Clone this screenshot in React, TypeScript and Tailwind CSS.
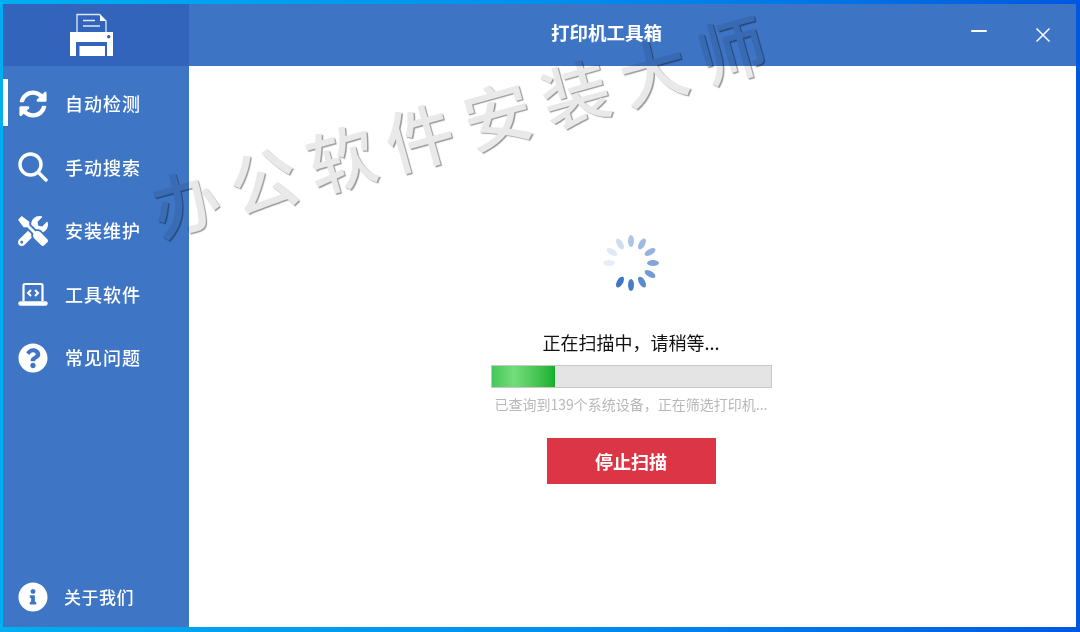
import React from "react";
import { FaSyncAlt, FaTools, FaQuestionCircle, FaInfoCircle } from "react-icons/fa";

const font = { fontFamily: '"Noto Sans CJK SC", "Liberation Sans", sans-serif' };

function PrinterLogo() {
  return (
    <svg width="43" height="44" viewBox="0 0 43 44">
      <path d="M7 19V1.500h22.500L36 8v11" fill="none" stroke="#fff" strokeOpacity="0.85" strokeWidth="1.300" />
      <path d="M30 1.500L36 8h-6z" fill="#fff" />
      <path d="M13 7.500h12M13 13h17" stroke="#fff" strokeOpacity="0.85" strokeWidth="1.300" fill="none" />
      <path fillRule="evenodd" fill="#fff" d="M0 19h43v24h-6V29H6v14H0zM38.700 22a1.700 1.700 0 1 0 .01 0z" />
      <path fill="#fff" d="M9.500 33H35v10H9.500z" />
    </svg>
  );
}

function LaptopCode() {
  return (
    <svg width="30" height="25" viewBox="0 0 30 25" fill="none" stroke="#fff">
      <path d="M5.500 19V3.500A1.500 1.500 0 0 1 7 2h16a1.500 1.500 0 0 1 1.500 1.500V19" strokeWidth="2.200" />
      <path d="M2.500 21.500h25" strokeWidth="4.400" strokeLinecap="round" />
      <path d="M13 8l-3 3 3 3M17 8l3 3-3 3" strokeWidth="2" />
    </svg>
  );
}

function SearchIcon() {
  return (
    <svg width="30" height="30" viewBox="0 0 30 30" fill="none" stroke="#fff" strokeWidth="3.400" strokeLinecap="round">
      <circle cx="12.500" cy="12.500" r="10.500" />
      <path d="M20.500 20.500l7.500 7.500" />
    </svg>
  );
}

const items = [
  { label: "自动检测", icon: <FaSyncAlt size={28} color="#fff" />, active: true },
  { label: "手动搜索", icon: <SearchIcon /> },
  { label: "安装维护", icon: <FaTools size={30} color="#fff" /> },
  { label: "工具软件", icon: <LaptopCode /> },
  { label: "常见问题", icon: <FaQuestionCircle size={30} color="#fff" /> },
];

const opacities = [0.42, 0.5, 0.55, 0.65, 0.72, 0.85, 0.95, 1, 0, 0.12, 0.16, 0.25];

function Spinner() {
  return (
    <svg width="60" height="60" viewBox="-30 -30 60 60">
      {opacities.map((o, i) => (
        <ellipse key={i} cx="0" cy="-22" rx="3" ry="6" fill="#3f75c4" opacity={o} transform={`rotate(${i * 30})`} />
      ))}
    </svg>
  );
}

function NavItem({ label, icon, active }: { label: string; icon: React.ReactNode; active?: boolean }) {
  return (
    <div className="relative flex h-[63.500px] items-center pl-[15px] text-white">
      {active && <div className="absolute left-0 top-[7px] h-[47px] w-[5px] bg-white" />}
      <div className="flex w-[30px] items-center justify-center">{icon}</div>
      <span className="ml-[17px] text-[18px] font-medium tracking-[1px]">{label}</span>
    </div>
  );
}

export default function App() {
  return (
    <div
      style={font}
      className="relative h-[632px] w-[1080px] overflow-hidden bg-gradient-to-r from-[#00aef2] via-[#0090ee] to-[#0058e0] pb-[5px] pl-[3px] pr-[4px] pt-[4px]"
    >
      <div className="flex h-full w-full">
        <aside className="flex w-[186px] shrink-0 flex-col bg-[#3e76c5]">
          <div className="flex h-[62px] shrink-0 items-center justify-center bg-[#3264bc] pr-[9px]">
            <PrinterLogo />
          </div>
          <nav className="pt-[6px]">
            {items.map((it) => (
              <NavItem key={it.label} {...it} />
            ))}
          </nav>
          <div className="mt-auto flex h-[60px] items-center pl-[15px] text-white">
            <div className="flex w-[30px] items-center justify-center">
              <FaInfoCircle size={30} color="#fff" />
            </div>
            <span className="ml-[16px] text-[17px] font-medium tracking-[0.500px]">关于我们</span>
          </div>
        </aside>
        <div className="flex min-w-0 flex-1 flex-col">
          <header className="relative flex h-[62px] shrink-0 items-center justify-center bg-[#3d74c4] pb-[4px] pr-[52px] text-[18.500px] font-bold text-white">
            打印机工具箱
            <div className="absolute right-[25px] top-[23px] flex items-start gap-[48px]">
              <div className="mt-[3px] h-[2px] w-[16px] rounded-full bg-white" />
              <svg width="16" height="16" viewBox="0 0 16 16" stroke="#fff" strokeWidth="1.500">
                <path d="M1.500 1.500l13 13M14.500 1.500l-13 13" />
              </svg>
            </div>
          </header>
          <main className="flex flex-1 flex-col items-center bg-white pr-[3px] pt-[167px]">
            <Spinner />
            <div className="mt-[36px] text-[18px] leading-[26px] text-[#111]">正在扫描中，请稍等...</div>
            <div className="mt-[10px] h-[23px] w-[281px] border border-[#c8c8c8] bg-[#e4e4e4]">
              <div className="h-full w-[63px] bg-gradient-to-r from-[#47c75a] via-[#72dd7c] via-35% to-[#10b02c]" />
            </div>
            <div className="mt-[6px] text-[14px] leading-[20px] text-[#b8b8b8]">已查询到139个系统设备，正在筛选打印机...</div>
            <button className="mt-[24px] h-[46px] w-[169px] bg-[#dc3545] text-[18px] font-bold text-white">停止扫描</button>
          </main>
        </div>
      </div>
      <div className="pointer-events-none absolute left-[140px] top-[82px] origin-center -rotate-[15.600deg] whitespace-nowrap text-[68px] font-medium leading-[80px] tracking-[13px] text-[#e9e9e9] mix-blend-multiply [text-shadow:1px_1.500px_1px_#9a9a9a]">
        办公软件安装大师
      </div>
    </div>
  );
}
